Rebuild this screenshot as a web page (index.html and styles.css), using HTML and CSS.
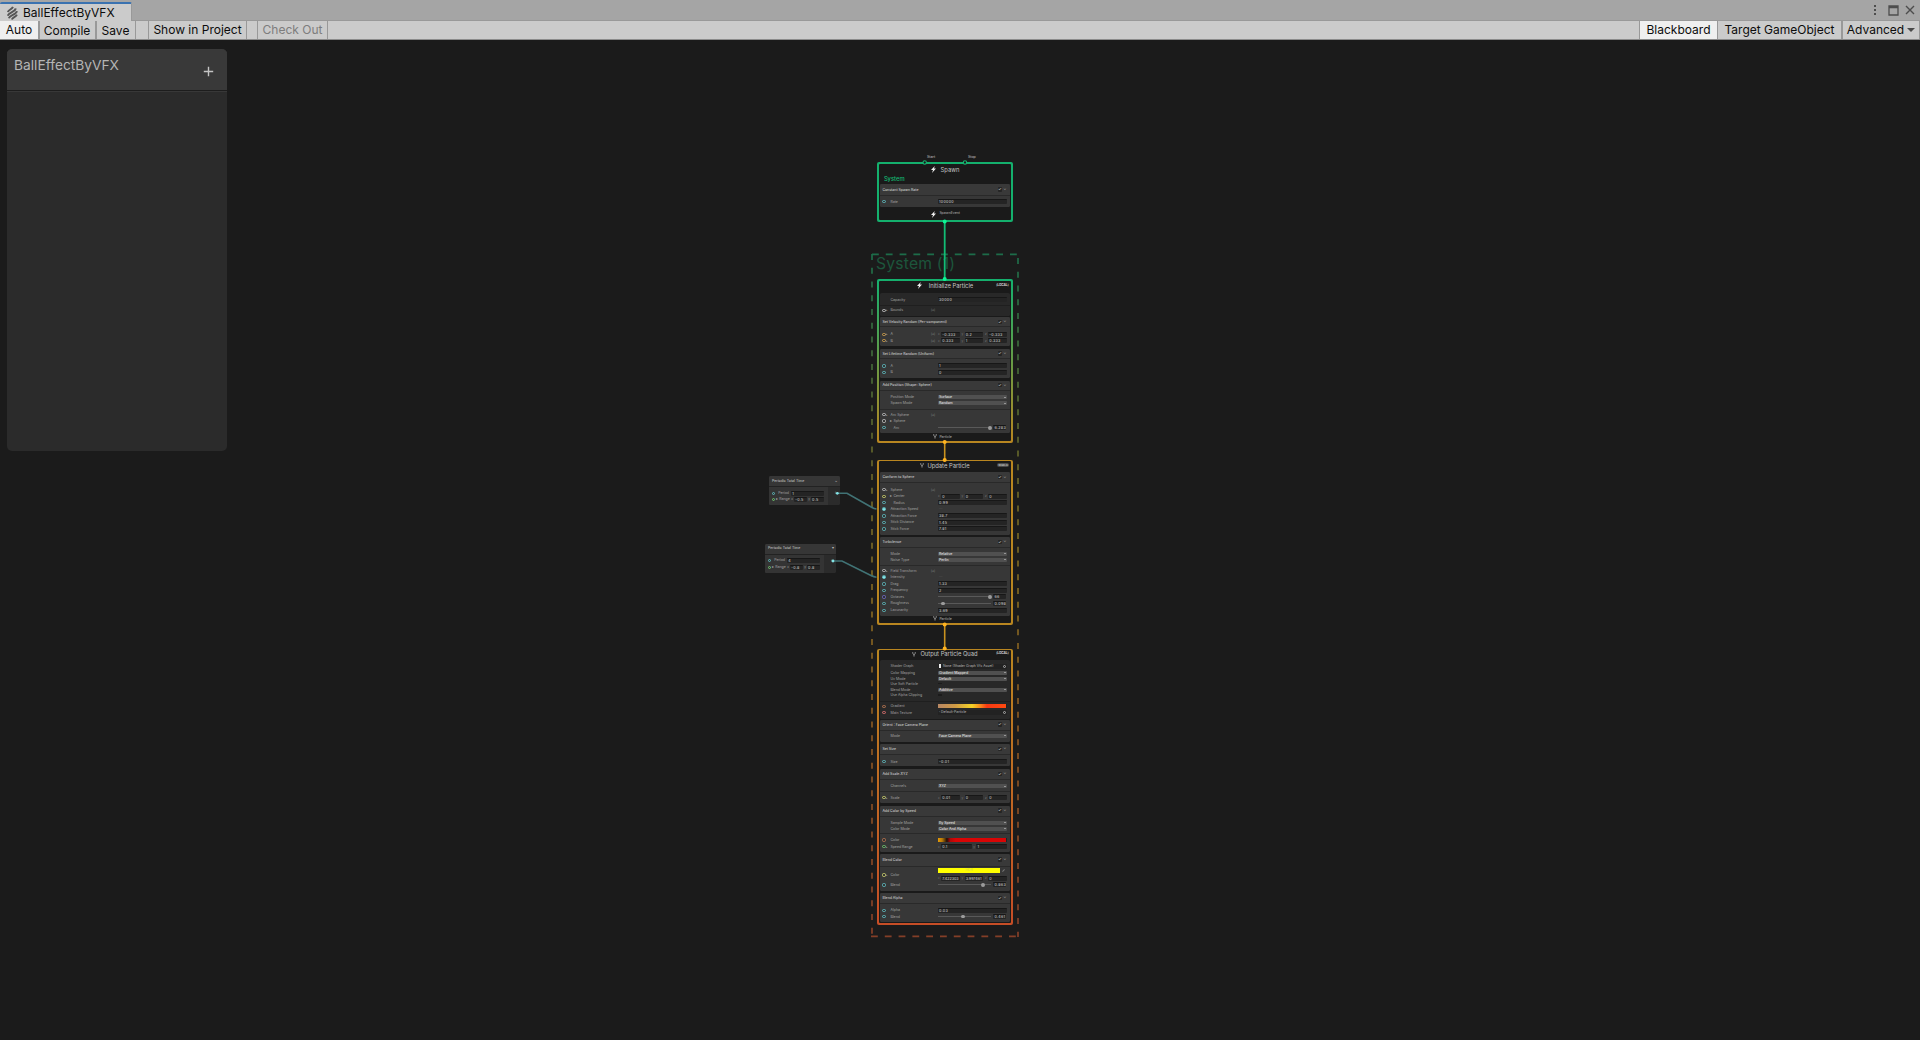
FILE: index.html
```html
<!DOCTYPE html>
<html lang="en">
<head>
<meta charset="utf-8">
<title>BallEffectByVFX</title>
<link rel="stylesheet" href="styles.css">
</head>
<body>
<div class="window">
  <header class="tabbar">
    <div class="tab">
      <svg class="tab-icon" viewBox="0 0 12 15"><g fill="none" stroke="#565656" stroke-width="2.100"><path d="M1 6.500C1.500 4 5.500 3.500 6.500 .8"/><path d="M.8 10.500C1.500 7 9 6.500 9.500 2.500"/><path d="M2 13.300C2.800 9.500 10.200 9.500 10.800 5.500"/><path d="M5.300 14.500C6 12 9.800 12 10.800 9.300"/></g></svg>
      <span>BallEffectByVFX</span>
    </div>
    <div class="window-controls">
      <svg width="4" height="12" viewBox="0 0 4 12"><path d="M1 1h2v2H1zM1 5h2v2H1zM1 9h2v2H1z" fill="#4d4d4d"/></svg>
      <svg width="11" height="11" viewBox="0 0 11 11"><path d="M1 1h9v9H1zM1 2.500h9" fill="none" stroke="#4d4d4d" stroke-width="1.300"/></svg>
      <svg width="10" height="10" viewBox="0 0 10 10"><path d="M1 1l8 8M9 1L1 9" fill="none" stroke="#4d4d4d" stroke-width="1.400"/></svg>
    </div>
  </header>
  <nav class="toolbar">
    <button class="tool auto on">Auto</button>
    <button class="tool compile low">Compile</button>
    <button class="tool save low">Save</button>
    <span class="gap gap-a"></span>
    <button class="tool show">Show in Project</button>
    <span class="gap gap-b"></span>
    <button class="tool check-out off">Check Out</button>
    <span class="spacer"></span>
    <button class="tool board on">Blackboard</button>
    <button class="tool target">Target GameObject</button>
    <button class="tool advanced">Advanced<i class="caret"></i></button>
  </nav>
  <main class="canvas">
    <aside class="blackboard">
      <div class="blackboard-head">
        <h1>BallEffectByVFX</h1>
        <svg width="11" height="11" viewBox="0 0 11 11"><path d="M5.500 .8v9.400M.8 5.500h9.400" stroke="#c4c4c4" stroke-width="1.400"/></svg>
      </div>
    </aside>
    <div class="group-title">System (1)</div>
    <div id="nodes"></div>
    <svg class="wires" width="1920" height="1000" viewBox="0 40 1920 1000" fill="none">
      <defs>
        <linearGradient id="flow" gradientUnits="userSpaceOnUse" x1="0" y1="254" x2="0" y2="936">
          <stop offset="0" stop-color="#1c6c49"/><stop offset=".3" stop-color="#636329"/><stop offset=".5" stop-color="#806621"/><stop offset=".7" stop-color="#875521"/><stop offset="1" stop-color="#843e27"/>
        </linearGradient>
      </defs>
      <g stroke="url(#flow)" stroke-width="1.700">
        <path stroke-dasharray="6.800 7" d="M872 254.300h146.500M871 936.300h147"/>
        <path stroke-dasharray="6 7.750" d="M872 254v683M1018 258v679"/>
      </g>
      <g stroke="#417375" stroke-width="1.600"><path d="M837 493.300h10L872 507.500Q874 508.700 876.500 509M833 561h9L871 575.500Q874 577 876.500 577.200"/></g>
      <path stroke="#12bd75" stroke-width="1.800" d="M944.700 222v57"/>
      <path stroke="#c9921f" stroke-width="1.600" d="M944.700 442v18M944.700 624v25"/>
      <g fill="#0cf595"><circle cx="944.700" cy="221.500" r="2"/><circle cx="944.700" cy="279" r="2"/></g>
      <g fill="#ffb320"><circle cx="944.700" cy="442" r="2"/><circle cx="944.700" cy="460" r="2"/><circle cx="944.700" cy="624.500" r="2"/><circle cx="944.700" cy="648.500" r="2"/></g>
      <g fill="#1b1b1b" stroke="#16b873" stroke-width="1.100"><circle cx="924.700" cy="162.500" r="1.700"/><circle cx="965" cy="162.500" r="1.700"/></g>
      <g fill="#84e4e7"><circle cx="837.300" cy="493.300" r="1.400"/><circle cx="833" cy="561" r="1.400"/><circle cx="884" cy="509.300" r="1.300"/><circle cx="884" cy="577.300" r="1.300"/></g>
    </svg>
    <span class="flow-label start">Start</span>
    <span class="flow-label stop">Stop</span>
  </main>
</div>
<script src="graph.js"></script>
</body>
</html>
```
FILE: graph.js
```js
const BOLT = '<svg class="bolt" viewBox="0 0 10 14"><path d="M7.500 0L0 8h4L2 14l8-9H6z" fill="#f0f0f0"/></svg>';
const DOTS = '<svg class="dots" viewBox="0 0 10 12"><path d="M1 3l4 3 4-3M5 6v5M1 1h2M7 1h2" fill="none" stroke="#c8c8c8" stroke-width="1.800"/></svg>';
const ROW = 6;

const field = (v, cls = '') => `<span class="field ${cls}">${v}</span>`;
const drop = v => `<span class="drop"><b>${v}</b><i></i></span>`;
const axes = (...vs) => vs.map((v, i) => `<em>${'xyz'[i]}</em>${field(v)}`).join('');
const slider = (pos, v) => `<span class="track"><i style="left:${pos}%"></i></span>${field(v, 'short')}`;
const none = '<span class="dash">—</span>';

// A row: [centre y, port colour, label, control, options]
// options: "a" foldout arrow, "s" coordinate space icon, "i" indented label
const nodes = [
  { y: 162.3, h: 59.600, from: '#14b06d', to: '#14b06d', icon: BOLT, gap: 5, title: 'Spawn', ty: 170, system: 'System',
    foot: 'SpawnEvent', fy: 213.300, footIcon: BOLT,
    blocks: [{ top: 184.300, head: 196, end: 207.300, title: 'Constant Spawn Rate', rows: [[201.700, 'c', 'Rate', field('100000')]] }] },
  { y: 279, h: 163.700, from: '#14b06d', to: '#b98620', icon: BOLT, gap: 7, title: 'Initialize Particle', ty: 286, badge: '[LOCAL]',
    foot: 'Particle', fy: 437, footIcon: DOTS,
    blocks: [
      { top: 293, end: 316.500, rows: [[299.700, '', 'Capacity', field('30000')], [306], [310.300, 'w', 'Bounds', '', 'as']] },
      { top: 317.300, head: 327.300, end: 346.300, title: 'Set Velocity Random (Per-component)', rows: [
        [334.300, 'o', 'A', axes('-0.333', '0.2', '-0.333'), 'as'], [340.700, 'o', 'B', axes('0.333', '1', '0.333'), 'as']] },
      { top: 349, head: 359.300, end: 378.300, title: 'Set Lifetime Random (Uniform)', rows: [
        [366, 'c', 'A', field('1')], [372.400, 'c', 'B', field('0')]] },
      { top: 380.700, head: 390.700, end: 433, title: 'Add Position (Shape: Sphere)', rows: [
        [397.300, '', 'Position Mode', drop('Surface')], [403.300, '', 'Spawn Mode', drop('Random')], [410],
        [414.700, 'w', 'Arc Sphere', '', 'as'], [421, 'w', '▸ Sphere', ''], [427.700, 'c', 'Arc', slider(97, '6.283'), 'i']] }] },
  { y: 459.700, h: 165, from: '#b98620', to: '#b98620', icon: DOTS, gap: 3, title: 'Update Particle', ty: 466, badge: 'WORLD', dark: true,
    foot: 'Particle', fy: 619, footIcon: DOTS,
    blocks: [
      { top: 472, head: 483.300, end: 534.700, title: 'Conform to Sphere', rows: [
        [489.700, 'w', 'Sphere', '', 'as'], [496.300, 'y', '▸ Center', axes('0', '0', '0')], [502.700, 'c', 'Radius', field('0.99'), 'i'],
        [509, 'c', 'Attraction Speed', none], [516, 'c', 'Attraction Force', field('38.7')], [522.300, 'c', 'Stick Distance', field('1.45')], [529, 'c', 'Stick Force', field('7.81')]] },
      { top: 537, head: 547.700, end: 616, title: 'Turbulence', rows: [
        [553.700, '', 'Mode', drop('Relative')], [559.700, '', 'Noise Type', drop('Perlin')], [565.700],
        [570.700, 'w', 'Field Transform', '', 'as'], [577, 'c', 'Intensity', none], [584, 'c', 'Drag', field('1.33')], [590.500, 'c', 'Frequency', field('2')],
        [597, 'v', 'Octaves', slider(97, '66')], [603.500, 'c', 'Roughness', slider(9, '0.098')], [610.300, 'c', 'Lacunarity', field('3.69')]] }] },
  { y: 648.500, h: 276.300, from: '#b98620', to: '#c64d26', icon: DOTS, gap: 4, title: 'Output Particle Quad', ty: 654, badge: '[LOCAL]',
    blocks: [
      { top: 660, end: 718.700, rows: [
        [666, '', 'Shader Graph', '<span class="asset"><u></u>None (Shader Graph Vfx Asset)<s></s></span>'],
        [672.500, '', 'Color Mapping', drop('Gradient Mapped')], [678.500, '', 'Uv Mode', drop('Default')], [683.600, '', 'Use Soft Particle', '<span class="tick"></span>'],
        [689.600, '', 'Blend Mode', drop('Additive')], [694.800, '', 'Use Alpha Clipping', '<span class="tick"></span>'], [701],
        [706.300, 'r', 'Gradient', '<span class="ramp fire"></span>'],
        [712.700, 'p', 'Main Texture', '<span class="asset">▫ Default-Particle<s></s></span>']] },
      { top: 719.700, head: 730.700, end: 742.300, title: 'Orient : Face Camera Plane', rows: [[736, '', 'Mode', drop('Face Camera Plane')]] },
      { top: 744, head: 754.700, end: 765.700, title: 'Set Size', rows: [[761.600, 'c', 'Size', field('-0.01')]] },
      { top: 769, head: 779.700, end: 803.300, title: 'Add Scale.XYZ', rows: [
        [786.300, '', 'Channels', drop('XYZ')], [792], [797.700, 'y', 'Scale', axes('0.01', '0', '0'), 'a']] },
      { top: 805.700, head: 816.700, end: 851.700, title: 'Add Color by Speed', rows: [
        [822.600, '', 'Sample Mode', drop('By Speed')], [828.700, '', 'Color Mode', drop('Color And Alpha')], [834],
        [840, 'r', 'Color', '<span class="ramp ember"></span>'], [846.700, 'g', 'Speed Range', axes('0.1', '1'), 'a']] },
      { top: 853.700, head: 866.700, end: 890.700, title: 'Blend Color', rows: [
        [875, 'y', 'Color', `<span class="hdr"><span class="hdr-top"><b>HDR</b><i></i></span><span class="hdr-row">${axes('7.422303', '3.997461', '0')}</span></span>`, 'a'],
        [885, 'c', 'Blend', slider(84, '0.863')]] },
      { top: 892.700, head: 904.300, end: 921.700, title: 'Blend Alpha', rows: [
        [910.300, 'c', 'Alpha', field('0.03')], [916.600, 'c', 'Blend', slider(46, '0.461')]] }] }
];

const line = (centre, from, height) => `margin-top:${(centre - height / 2 - from).toFixed(2)}px`;

function rowsHtml(rows, start) {
  let at = start;
  return rows.map(([y, port, label, control, opt = '']) => {
    const h = label === undefined ? 1 : ROW;
    const style = line(y, at, h);
    at = y + h / 2;
    if (h === 1) return `<div class="rule" style="${style}"></div>`;
    return `<div class="row" style="${style}"><span class="port ${port ? 'port-' + port : ''}"></span>` +
      `<span class="arrow">${opt.includes('a') ? '▸' : ''}</span>` +
      `<span class="label ${opt.includes('i') ? 'indent' : ''}">${label}</span>` +
      `<span class="space">${opt.includes('s') ? '[⋏]' : ''}</span><span class="control">${control}</span></div>`;
  }).join('');
}

function nodeHtml(n) {
  let at = n.y + 1.600;
  let out = `<div class="title" style="${line(n.ty, at, 8)};gap:${n.gap}px">${n.icon}<span>${n.title}</span>` +
    (n.badge ? `<span class="badge ${n.dark ? 'boxed' : ''}">${n.badge}</span>` : '') + '</div>';
  at = n.ty + 4;
  if (n.system) { out += `<div class="system" style="${line(178.800, at, 6)}">${n.system}</div>`; at = 181.800; }
  for (const b of n.blocks) {
    out += `<section class="block ${b.head ? '' : 'settings'}" style="${line(b.top, at, 0)};height:${(b.end - b.top).toFixed(2)}px">`;
    if (b.head) out += `<div class="block-head" style="height:${(b.head - b.top).toFixed(2)}px"><span>${b.title}</span><i class="check">✓</i><i class="fold">⌄</i></div>`;
    out += rowsHtml(b.rows, b.head || b.top) + '</section>';
    at = b.end;
  }
  if (n.foot) out += `<div class="foot" style="${line(n.fy, at, 6)}"><span class="foot-icon">${n.footIcon}</span><span>${n.foot}</span></div>`;
  return `<article class="node" style="top:${n.y - 40}px;height:${n.h}px;background:linear-gradient(${n.from},${n.to})"><div class="inner">${out}</div></article>`;
}

const operator = (x, y, fold, period, low, high) => `<article class="operator" style="left:${x}px;top:${y - 40}px">
  <div class="op-head"><span>Periodic Total Time</span><i>${fold}</i></div>
  <div class="op-body"><div class="op-inputs">
    <div class="op-row"><span class="port port-c"></span><label>Period</label>${field(period)}</div>
    <div class="op-row"><span class="port port-g"></span><label>▸ Range</label><em>x</em>${field(low)}<em>y</em>${field(high)}</div>
  </div><div class="op-out">t</div></div></article>`;

document.getElementById('nodes').innerHTML = nodes.map(nodeHtml).join('') +
  operator(769, 476, '⌄', '1', '-0.5', '0.5') + operator(765, 543.600, '▾', '4', '-0.8', '0.8');
```
FILE: styles.css
```css
* { box-sizing: border-box; }
body { margin: 0; font-family: Inter, "Liberation Sans", sans-serif; background: #1b1b1b; overflow: hidden; }
i, em { font-style: normal; }
svg { flex: none; display: block; }

.window { width: 1920px; height: 1040px; display: flex; flex-direction: column; }
.tabbar { height: 20px; background: #a5a5a5; display: flex; justify-content: space-between; }
.tab { width: 132px; height: 19px; margin-top: 2px; border-top: 2px solid #3a72b0; border-radius: 2px 2px 0 0; border-right: 1px solid #999; background: #cbcbcb; display: flex; align-items: center; gap: 5px; padding-left: 7px; font-size: 12px; line-height: 16px; color: #0c0c0c; position: relative; }
.tab-icon { width: 11px; height: 14px; }
.window-controls { display: flex; align-items: center; gap: 10px; padding-right: 5px; }
.window-controls svg:nth-child(2) { margin-left: 1px; }
.window-controls svg:nth-child(3) { margin-left: -4px; }

.toolbar { height: 20px; background: #cbcbcb; border-top: 1px solid #999; border-bottom: 1px solid #8b8b8b; display: flex; }
.tool { font: 12px/17px Inter, "Liberation Sans", sans-serif; color: #0c0c0c; border: 0; border-right: 1px solid #999; background: none; padding: 0 0 1px; text-align: center; white-space: nowrap; flex: none; }
.tool.on { background: #efefef; }
.tool.low { padding: 1px 1px 0 0; }
.tool.off { color: #7d7d7d; }
.auto { width: 40px; border-right-width: 2px; }
.compile { width: 57px; border-right-width: 2px; }
.save { width: 39px; }
.show { width: 98px; }
.check-out { width: 70px; }
.board { width: 79px; border-left: 1px solid #999; }
.target { width: 125px; border-right-width: 2px; }
.advanced { width: 77px; display: flex; align-items: center; justify-content: center; gap: 3px; }
.caret { border: 4px solid transparent; border-top: 4px solid #4a4a4a; border-bottom: 0; }
.gap { border-right: 1px solid #999; }
.gap-a { width: 13px; }
.gap-b { width: 11px; }
.spacer { flex: 1; }

.canvas { position: relative; height: 1000px; background: #1b1b1b; overflow: hidden; }
.blackboard { width: 220px; height: 402px; margin: 9px 0 0 7px; border-radius: 5px; background: #2b2b2b; overflow: hidden; }
.blackboard-head { height: 42px; background: #393939; border-bottom: 1px solid #1d1d1d; box-shadow: 0 1px #383838; display: flex; justify-content: space-between; padding: 0 13px 0 7px; }
.blackboard-head h1 { margin: 7px 0 0; font-size: 13.750px; line-height: 18px; font-weight: 400; color: #b5b5b5; }
.blackboard-head svg { margin-top: 17px; }

.group-title { position: absolute; left: 876px; top: 214px; font-size: 15.700px; line-height: 20px; color: #1d553b; letter-spacing: .2px; white-space: nowrap; }
.wires { position: absolute; left: 0; top: 0; }
.flow-label { position: absolute; top: 115px; font-size: 3.600px; line-height: 5px; color: #c4c4c4; }
.start { left: 927px; }
.stop { left: 968px; }

.node { position: absolute; left: 877.200px; width: 135.600px; padding: 1.600px; border-radius: 2px; line-height: 6px; white-space: nowrap; }
.inner { height: 100%; background: #1a1a1a; border-radius: 1px; padding: 0 1.600px; display: flow-root; overflow: hidden; }
.title { height: 8px; display: flex; align-items: center; justify-content: center; font-size: 5.800px; color: #c4c4c4; position: relative; }
.bolt { width: 5px; height: 7px; }
.dots { width: 4px; height: 5px; }
.badge { position: absolute; right: 1px; top: 1px; font-size: 3.200px; line-height: 4.500px; font-weight: 700; color: #d4d4d4; letter-spacing: -.1px; }
.badge.boxed { background: #4b4b4b; border-radius: 2px; padding: 0 .8px; color: #bbb; font-size: 2.700px; }
.system { height: 6px; padding-left: 3.500px; font-size: 5.800px; font-weight: 500; color: #13bb74; }
.block { background: #373737; border-radius: 1.500px; overflow: hidden; display: flow-root; font-size: 3.520px; }
.block.settings { background: #282828; }
.block-head { display: flex; align-items: center; padding: 0 2px; border-bottom: 1px solid #292929; color: #cacaca; background: #393939; }
.block-head span { flex: 1; font-weight: 500; }
.block-head .check { width: 4.500px; height: 4.500px; background: #252525; color: #e8e8e8; border-radius: 1px; font-size: 4px; line-height: 4.500px; text-align: center; }
.block-head .fold { width: 5.500px; text-align: center; font-size: 4px; line-height: 4px; padding-bottom: 1px; color: #aaa; }
.rule { height: 1px; background: #292929; }
.settings .rule { background: #1f1f1f; }

.row { height: 6px; display: flex; align-items: center; padding-left: 2px; color: #a2a2a2; }
.port { width: 3.200px; height: 3.200px; flex: none; border-radius: 50%; margin-right: .3px; }
.port-c, .port-o, .port-y, .port-g, .port-v, .port-r, .port-p, .port-w { border: 1px solid; background: #333; }
.port-c { border-color: #5eb8bc; }
.port-o { border-color: #d0a04a; }
.port-y { border-color: #c8cc6a; }
.port-g { border-color: #6fc26c; }
.port-v { border-color: #6f68c0; }
.port-r { border-color: #b3714d; }
.port-p { border-color: #d46a6a; }
.port-w { border-color: #bdbdbd; }
.arrow { width: 4.600px; color: #999; font-size: 2.800px; }
.label { width: 40.500px; }
.label.indent { padding-left: 3px; }
.space { width: 7px; color: #909090; font-size: 3px; }
.control { width: 69px; display: flex; align-items: center; min-width: 0; }
.field { flex: 1 1 0; min-width: 0; height: 5px; overflow: hidden; background: #242424; border-top: 1px solid #171717; border-radius: 1px; color: #d8d8d8; padding-left: 1px; line-height: 4.200px; font-size: 3.700px; letter-spacing: .3px; }
.field.short { flex: none; width: 13px; }
.control em { width: 3.200px; font-size: 3px; color: #777; flex: none; }
.control .field + em { margin-left: 1.500px; }
.drop { flex: 1; height: 4px; background: #505050; border-radius: 1px; color: #e2e2e2; display: flex; justify-content: space-between; align-items: center; padding: 0 1px; }
.drop b { font-weight: 500; line-height: 4px; }
.drop i { border: 1.200px solid transparent; border-top: 1.500px solid #ddd; border-bottom: 0; }
.dash { color: #555; padding-left: 1px; }
.tick { width: 4px; height: 1.500px; background: #1b1b1b; }
.track { width: 53px; height: 1px; background: #595959; position: relative; margin-right: 2.500px; flex: none; }
.track i { position: absolute; width: 3.800px; height: 3.800px; margin: -1.400px 0 0 -1.400px; border-radius: 50%; background: #9b9b9b; }
.asset { flex: 1; height: 5px; background: #222; display: flex; align-items: center; padding: 0 1px; color: #bbb; font-size: 3.400px; line-height: 5px; }
.asset u { width: 2px; height: 3.500px; background: #ececec; margin-right: 2px; }
.asset s { width: 3px; height: 3px; border: 1px solid #aaa; border-radius: 50%; margin-left: auto; }
.ramp { flex: 1; height: 4px; border-right: 1px solid #222; }
.fire { background: linear-gradient(90deg, #b88763, #cf9a45 25%, #f4d227 50%, #f98a1c 62%, #f73913 72%, #ff4a10); }
.ember { background: linear-gradient(90deg, #e59b08, #b87a08 6%, #201008 13%, #b00808 18%, #d90505 26%); }
.hdr { flex: 1; min-width: 0; }
.hdr-top { display: flex; align-items: center; gap: 2px; }
.hdr-top b { width: 62px; height: 5px; background: #ffff00; color: #d8d848; text-align: center; line-height: 5px; font-weight: 400; }
.hdr-top i { width: 3px; height: 1px; background: #777; transform: rotate(-45deg); }
.hdr-row { display: flex; align-items: center; margin-top: 2px; }
.hdr-row .field { letter-spacing: 0; }
.foot { height: 6px; display: flex; align-items: center; font-size: 3.500px; color: #b8b8b8; }
.foot-icon { width: 59px; display: flex; justify-content: flex-end; padding-right: 2px; }
.foot-icon .bolt { margin-right: 1.500px; margin-top: 2px; }

.operator { position: absolute; width: 71px; height: 29.300px; background: #2b2b2b; border-radius: 1.500px; overflow: hidden; font-size: 3.520px; line-height: 5px; color: #a2a2a2; white-space: nowrap; }
.op-head { height: 11px; background: #363636; border-bottom: 1px solid #222; display: flex; justify-content: space-between; align-items: center; padding: 0 2.500px 0 3px; color: #bcbcbc; font-weight: 500; }
.op-body { display: flex; height: 18.300px; }
.op-inputs { width: 59px; background: #343434; padding: 3px 4px 0 3px; }
.op-row { height: 6.500px; display: flex; align-items: center; }
.op-row .port { margin-right: 3px; }
.op-row label { width: 13px; }
.op-row em { width: 4px; font-size: 3px; text-align: center; }
.op-row:nth-child(2) .port { margin-right: 1px; }
.op-row:nth-child(2) label { width: 14px; }
.op-out { flex: 1; padding: 4px 0 0 7px; font-size: 3.400px; line-height: 4px; }
```
